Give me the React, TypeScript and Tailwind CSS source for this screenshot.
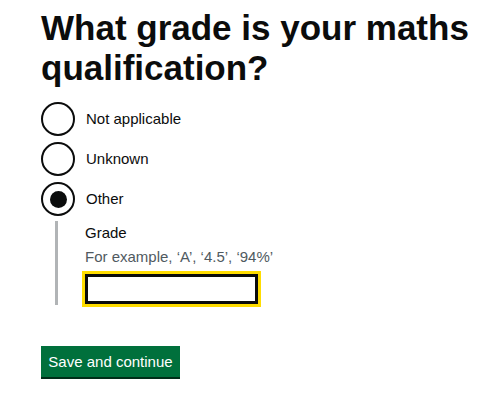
import React from "react";

const font = { fontFamily: '"Liberation Sans", Arial, sans-serif' };

function Radio({ label, checked }: { label: string; checked?: boolean }) {
  return (
    <div className="flex h-[40px] items-center">
      <div className="flex h-[34px] w-[34px] shrink-0 items-center justify-center rounded-full border-2 border-[#0b0c0c]">
        {checked && <div className="h-[17px] w-[17px] rounded-full bg-[#0b0c0c]" />}
      </div>
      <span className="ml-[11px] text-[15px] leading-[20px] text-[#0b0c0c]">{label}</span>
    </div>
  );
}

export default function App() {
  return (
    <div className="min-h-[402px] bg-white pl-[41px] pt-[8px] text-[#0b0c0c]" style={font}>
      <h1 className="text-[35px] font-bold leading-[40px]">
        What grade is your maths qualification?
      </h1>
      <div className="mt-[11px]">
        <Radio label="Not applicable" />
        <Radio label="Unknown" />
        <Radio label="Other" checked />
      </div>
      <div className="ml-[14px] mt-[2px] border-l-[3px] border-[#b1b4b6] pb-[1px] pl-[27px]">
        <div className="pt-[2px] text-[15px] leading-[20px]">Grade</div>
        <div className="mt-[4px] text-[15px] leading-[20px] text-[#505a5f]">
          For example, ‘A’, ‘4.5’, ‘94%’
        </div>
        <div className="mt-[7px] h-[30px] w-[173px] border-[3px] border-[#0b0c0c] bg-white shadow-[0_0_0_3px_#ffdd00]" />
      </div>
      <button className="mt-[41px] flex h-[31px] w-[139px] items-center justify-center bg-[#00703c] text-[15px] leading-[20px] text-white shadow-[0_2px_0_#002d18]">
        Save and continue
      </button>
    </div>
  );
}
